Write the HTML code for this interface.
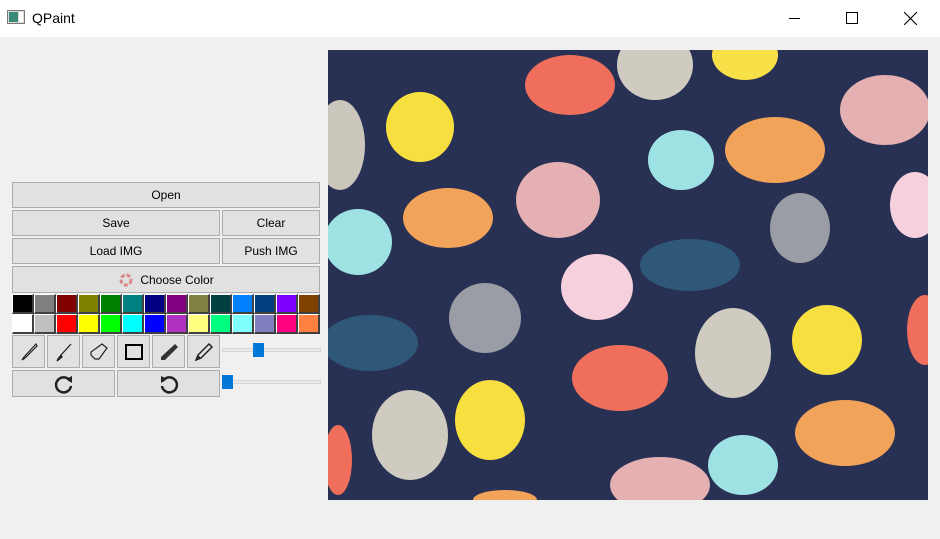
<!DOCTYPE html>
<html><head><meta charset="utf-8"><style>
*{box-sizing:border-box;margin:0;padding:0}
body{width:940px;height:539px;background:#f0f0f0;font-family:"Liberation Sans",sans-serif;font-size:12px;position:relative;overflow:hidden;color:#000}
.title{position:absolute;left:0;top:0;width:940px;height:37px;background:#fff}
.btn{position:absolute;background:#e1e1e1;border:1px solid #adadad;display:flex;align-items:center;justify-content:center;font-size:12px}
.sw{position:absolute;width:22px;height:20px;border-top:1px solid #fff;border-left:1px solid #fff;border-right:2px solid #404040;border-bottom:2px solid #404040}
.track{position:absolute;height:4px;background:#e7e7e7;border:1px solid #d6d6d6}
.handle{position:absolute;background:#0078d7}
</style></head><body>
<div class="title">
<svg style="position:absolute;left:7px;top:10px" width="18" height="15"><rect x="0.5" y="0.5" width="17" height="13" fill="#ddd" stroke="#777"/><rect x="2" y="2" width="9" height="10" fill="#3a8a7a"/><rect x="12" y="2" width="4" height="10" fill="#fff"/></svg>
<div style="position:absolute;left:32px;top:10px;font-size:14px">QPaint</div>
<div style="position:absolute;left:789px;top:18px;width:11px;height:1px;background:#000"></div>
<div style="position:absolute;left:846px;top:12px;width:12px;height:12px;border:1px solid #000"></div>
<svg style="position:absolute;left:904px;top:12px" width="13" height="13"><path d="M0 0L13 13M13 0L0 13" stroke="#000" stroke-width="1.1"/></svg>
</div>

<div class="btn" style="left:12px;top:182px;width:308px;height:26px">Open</div>
<div class="btn" style="left:12px;top:210px;width:208px;height:26px">Save</div>
<div class="btn" style="left:222px;top:210px;width:98px;height:26px">Clear</div>
<div class="btn" style="left:12px;top:238px;width:208px;height:26px">Load IMG</div>
<div class="btn" style="left:222px;top:238px;width:98px;height:26px">Push IMG</div>
<div class="btn" style="left:12px;top:266px;width:308px;height:27px"><svg width="16" height="16" style="margin-right:6px"><circle cx="8" cy="8" r="5" fill="none" stroke="#d88" stroke-width="3" stroke-dasharray="4 2"/></svg>Choose Color</div>

<div class="sw" style="left:12px;top:294px;background:#000"></div><div class="sw" style="left:34px;top:294px;background:#808080"></div><div class="sw" style="left:56px;top:294px;background:#800000"></div><div class="sw" style="left:78px;top:294px;background:#808000"></div><div class="sw" style="left:100px;top:294px;background:#008000"></div><div class="sw" style="left:122px;top:294px;background:#008080"></div><div class="sw" style="left:144px;top:294px;background:#000080"></div><div class="sw" style="left:166px;top:294px;background:#800080"></div><div class="sw" style="left:188px;top:294px;background:#808040"></div><div class="sw" style="left:210px;top:294px;background:#004040"></div><div class="sw" style="left:232px;top:294px;background:#0080ff"></div><div class="sw" style="left:254px;top:294px;background:#004080"></div><div class="sw" style="left:276px;top:294px;background:#8000ff"></div><div class="sw" style="left:298px;top:294px;background:#804000"></div>
<div class="sw" style="left:12px;top:314px;background:#fff"></div><div class="sw" style="left:34px;top:314px;background:#c0c0c0"></div><div class="sw" style="left:56px;top:314px;background:#f00"></div><div class="sw" style="left:78px;top:314px;background:#ff0"></div><div class="sw" style="left:100px;top:314px;background:#0f0"></div><div class="sw" style="left:122px;top:314px;background:#0ff"></div><div class="sw" style="left:144px;top:314px;background:#00f"></div><div class="sw" style="left:166px;top:314px;background:#b030c0"></div><div class="sw" style="left:188px;top:314px;background:#ffff80"></div><div class="sw" style="left:210px;top:314px;background:#00ff80"></div><div class="sw" style="left:232px;top:314px;background:#80ffff"></div><div class="sw" style="left:254px;top:314px;background:#8080c0"></div><div class="sw" style="left:276px;top:314px;background:#ff0080"></div><div class="sw" style="left:298px;top:314px;background:#ff8040"></div>

<div class="btn" style="left:12px;top:335px;width:33px;height:33px"><svg width="20" height="20"><path d="M17 2L5 15L3 18L6 16L18 4Z" fill="none" stroke="#222" stroke-width="1.2"/></svg></div>
<div class="btn" style="left:47px;top:335px;width:33px;height:33px"><svg width="20" height="20"><path d="M17 2L7 13M7 13L4 17L3 19L8 15Z" fill="#222" stroke="#222" stroke-width="1.3"/></svg></div>
<div class="btn" style="left:82px;top:335px;width:33px;height:33px"><svg width="22" height="22"><path d="M14 3L19 7L11 18L7 18L3 14L3 11Z" fill="none" stroke="#222" stroke-width="1.2"/></svg></div>
<div class="btn" style="left:117px;top:335px;width:33px;height:33px"><svg width="22" height="22"><rect x="3" y="4" width="16" height="14" fill="none" stroke="#000" stroke-width="2"/></svg></div>
<div class="btn" style="left:152px;top:335px;width:33px;height:33px"><svg width="22" height="22"><path d="M17 3L20 6L7 19L3 19L3 16Z" fill="#333"/></svg></div>
<div class="btn" style="left:187px;top:335px;width:33px;height:33px"><svg width="22" height="22"><path d="M16 3L19 6L8 17L3 19L5 14Z" fill="none" stroke="#222" stroke-width="1.5"/><path d="M3 19L5 14L8 17Z" fill="#222"/></svg></div>
<div class="track" style="left:222px;top:348px;width:99px"></div>
<div class="handle" style="left:253px;top:343px;width:11px;height:14px"></div>

<div class="btn" style="left:12px;top:370px;width:103px;height:27px"><svg width="22" height="22"><path d="M17 8A7.5 7.5 0 1 0 18 13" fill="none" stroke="#222" stroke-width="2.5"/><path d="M13 6L19 3L19 10Z" fill="#222"/></svg></div>
<div class="btn" style="left:117px;top:370px;width:103px;height:27px"><svg width="22" height="22"><path d="M5 8A7.5 7.5 0 1 1 4 13" fill="none" stroke="#222" stroke-width="2.5"/><path d="M9 6L3 3L3 10Z" fill="#222"/></svg></div>
<div class="track" style="left:222px;top:380px;width:99px"></div>
<div class="handle" style="left:222px;top:375px;width:11px;height:14px"></div>

<svg style="position:absolute;left:328px;top:50px" width="600" height="450" viewBox="328 50 600 450">
<rect x="328" y="50" width="600" height="450" fill="#283153"/>
<g>
<ellipse cx="570" cy="85" rx="45" ry="30" fill="#ef6f5c"/>
<ellipse cx="655" cy="65" rx="38" ry="35" fill="#cfcbc0"/>
<ellipse cx="745" cy="55" rx="33" ry="25" fill="#f8e048"/>
<ellipse cx="340" cy="145" rx="25" ry="45" fill="#cac6bc"/>
<ellipse cx="420" cy="127" rx="34" ry="35" fill="#f7df3f"/>
<ellipse cx="885" cy="110" rx="45" ry="35" fill="#e4b0b2"/>
<ellipse cx="775" cy="150" rx="50" ry="33" fill="#f1a35a"/>
<ellipse cx="681" cy="160" rx="33" ry="30" fill="#9ee2e4"/>
<ellipse cx="558" cy="200" rx="42" ry="38" fill="#e4b0b4"/>
<ellipse cx="448" cy="218" rx="45" ry="30" fill="#f1a35a"/>
<ellipse cx="358" cy="242" rx="34" ry="33" fill="#9ee2e4"/>
<ellipse cx="800" cy="228" rx="30" ry="35" fill="#9a9ca6"/>
<ellipse cx="915" cy="205" rx="25" ry="33" fill="#f6d0dc"/>
<ellipse cx="690" cy="265" rx="50" ry="26" fill="#2f5878"/>
<ellipse cx="597" cy="287" rx="36" ry="33" fill="#f6d0dc"/>
<ellipse cx="485" cy="318" rx="36" ry="35" fill="#9a9ca6"/>
<ellipse cx="370" cy="343" rx="48" ry="28" fill="#2f5878"/>
<ellipse cx="733" cy="353" rx="38" ry="45" fill="#cfcbc0"/>
<ellipse cx="827" cy="340" rx="35" ry="35" fill="#f7df3f"/>
<ellipse cx="620" cy="378" rx="48" ry="33" fill="#ef6f5c"/>
<ellipse cx="925" cy="330" rx="18" ry="35" fill="#ef6f5c"/>
<ellipse cx="410" cy="435" rx="38" ry="45" fill="#cfcbc0"/>
<ellipse cx="490" cy="420" rx="35" ry="40" fill="#f7df3f"/>
<ellipse cx="845" cy="433" rx="50" ry="33" fill="#f1a35a"/>
<ellipse cx="743" cy="465" rx="35" ry="30" fill="#9ee2e4"/>
<ellipse cx="660" cy="485" rx="50" ry="28" fill="#e4b0b2"/>
<ellipse cx="338" cy="460" rx="14" ry="35" fill="#ef6f5c"/>
<ellipse cx="505" cy="500" rx="32" ry="10" fill="#f1a35a"/>
</g>
</svg>
</body></html>
